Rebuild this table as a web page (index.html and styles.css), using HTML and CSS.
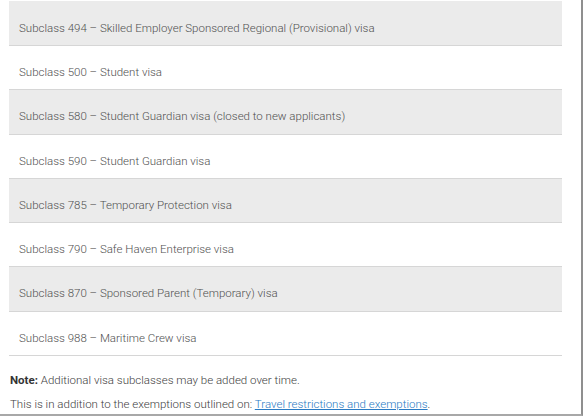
FILE: index.html
```html
<!DOCTYPE html>
<html>
<head>
<meta charset="utf-8">
<link rel="stylesheet" href="styles.css">
</head>
<body>
<div class="frame">
  <div class="list">
    <div class="row shaded first">Subclass 494 – Skilled Employer Sponsored Regional (Provisional) visa</div>
    <div class="row">Subclass 500 – Student visa</div>
    <div class="row shaded">Subclass 580 – Student Guardian visa (closed to new applicants)</div>
    <div class="row">Subclass 590 – Student Guardian visa</div>
    <div class="row shaded">Subclass 785 – Temporary Protection visa</div>
    <div class="row">Subclass 790 – Safe Haven Enterprise visa</div>
    <div class="row shaded">Subclass 870 – Sponsored Parent (Temporary) visa</div>
    <div class="row">Subclass 988 – Maritime Crew visa</div>
  </div>
  <p class="note"><strong>Note:</strong> Additional visa subclasses may be added over time.</p>
  <p class="note">This is in addition to the exemptions outlined on: <a href="#">Travel restrictions and exemptions</a>.</p>
</div>
</body>
</html>
```
FILE: styles.css
```css
html, body {
  margin: 0;
  padding: 0;
  background: #ffffff;
}
body {
  font-family: Roboto, "Liberation Sans", sans-serif;
  color: #505050;
}
.frame {
  box-sizing: border-box;
  width: 583px;
  height: 416px;
  padding: 1px 19px 0 9px;
  border-right: 2px solid #8f8f8f;
  border-bottom: 2px solid #a8a8a8;
  overflow: hidden;
}
.list {
  display: flex;
  flex-direction: column;
}
.row {
  box-sizing: border-box;
  height: 44.3px;
  padding: 18px 10px 0 10px;
  font-size: 11.5px;
  line-height: 16px;
  font-weight: 300;
  border-bottom: 1px solid #d6d6d6;
  white-space: nowrap;
}
.row.first {
  height: 45px;
  padding-top: 19px;
}
.shaded {
  background: #ebebeb;
}
.note {
  margin: 0;
  padding-left: 1px;
  font-size: 11.5px;
  line-height: 24px;
  font-weight: 300;
  color: #404040;
}
.note:first-of-type {
  margin-top: 12px;
}
.note strong {
  font-weight: 700;
  color: #333333;
}
.note a {
  color: #2a7bc4;
  text-decoration: underline;
}
```
